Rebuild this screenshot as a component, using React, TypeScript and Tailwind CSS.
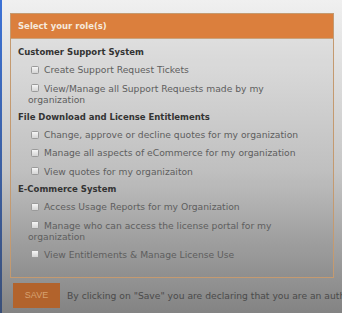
import React from "react";

type Item = { label: React.ReactNode };

const groups: { title: string; items: Item[] }[] = [
  {
    title: "Customer Support System",
    items: [
      { label: "Create Support Request Tickets" },
      { label: <>View/Manage all Support Requests made by my<br />organization</> },
    ],
  },
  {
    title: "File Download and License Entitlements",
    items: [
      { label: "Change, approve or decline quotes for my organization" },
      { label: "Manage all aspects of eCommerce for my organization" },
      { label: "View quotes for my organizaiton" },
    ],
  },
  {
    title: "E-Commerce System",
    items: [
      { label: "Access Usage Reports for my Organization" },
      { label: <>Manage who can access the license portal for my<br />organization</> },
      { label: "View Entitlements & Manage License Use" },
    ],
  },
];

function Box() {
  return (
    <span className="inline-block w-[8px] h-[8px] mr-[5px] ml-[3px] align-[-0.5px] rounded-[1.5px] border border-[#9a9a9a] bg-gradient-to-b from-[#f6f6f6] to-[#d4d4d4]" />
  );
}

export default function App() {
  return (
    <div className="relative w-[342px] h-[313px] overflow-hidden bg-gradient-to-b from-[#f0f0f0] via-[#c6c6c6] via-55% to-[#838383] font-['DejaVu_Sans',sans-serif]">
      <div className="absolute left-0 top-0 w-[2px] h-full bg-gradient-to-b from-[#3c72d6] to-[#3a4f78]" />
      <div className="pt-[13px] pl-[10px] w-[334px]">
        <div className="border border-[#c49a70] bg-black/[0.03]">
          <div className="h-[25px] bg-[#db7f3d] flex items-center px-[7px] text-[8.5px] font-bold text-[#f6e9dc] border-b border-[#c9a27c]">
            Select your role(s)
          </div>
          <div className="px-[7px] pt-[8px] pb-[17px] flex flex-col gap-[7.3px] text-[9.2px] leading-[11px] text-[#5e5e5e]">
            {groups.map((g) => (
              <React.Fragment key={g.title}>
                <div className="font-bold text-[#333] text-[8.5px] -mb-[1px]">{g.title}</div>
                {g.items.map((it, i) => (
                  <div key={i} className="pl-[10px]">
                    <Box />
                    {it.label}
                  </div>
                ))}
              </React.Fragment>
            ))}
          </div>
        </div>
      </div>
      <div className="flex items-center mt-[5px] pl-[13px] gap-[7px] whitespace-nowrap">
        <div className="shrink-0 w-[47px] h-[25px] bg-[#b2632c] flex items-center justify-center text-[9px] text-[#d6a271] font-['Liberation_Sans',sans-serif]">
          SAVE
        </div>
        <span className="text-[9.2px] text-[#4a4a4a]">
          By clicking on "Save" you are declaring that you are an authorized user
        </span>
      </div>
    </div>
  );
}
